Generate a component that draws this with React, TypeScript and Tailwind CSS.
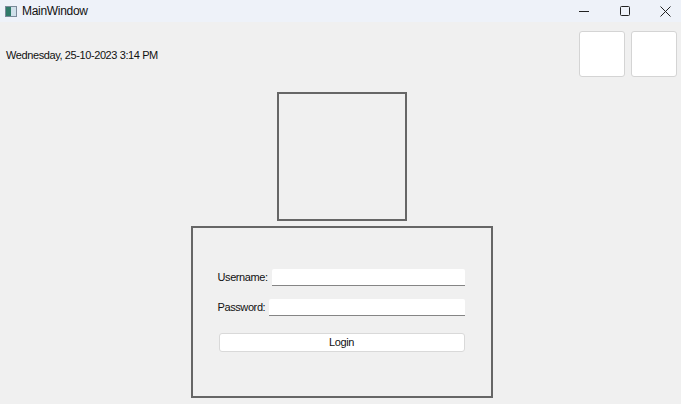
export default function App() {
  return (
    <div className="w-[681px] h-[404px] bg-[#f0f0f0] flex flex-col overflow-hidden text-[11px] tracking-[-0.4px] text-[#111]" style={{ fontFamily: '"Liberation Sans", Arial, sans-serif' }}>
      <div className="h-[22px] bg-[#eef2f9] flex items-center shrink-0">
        <svg width="12" height="11" viewBox="0 0 12 11" className="ml-[5px] mr-[5px]">
          <rect x="0.5" y="0.5" width="11" height="10" fill="#fff" stroke="#7a8a9a" />
          <rect x="1" y="1" width="5" height="9" fill="#2f7a6a" />
          <rect x="6" y="1" width="5" height="9" fill="#cfe0ea" />
        </svg>
        <span className="leading-none text-[12px] tracking-[-0.3px]">MainWindow</span>
        <div className="ml-auto mr-[-5px] flex items-center h-full">
          <div className="w-[41px] h-full flex items-center justify-center">
            <svg width="10" height="10" viewBox="0 0 10 10"><path d="M0 5.5h10" stroke="#222" strokeWidth="1" /></svg>
          </div>
          <div className="w-[41px] h-full flex items-center justify-center">
            <svg width="10" height="10" viewBox="0 0 10 10"><rect x="0.5" y="0.5" width="9" height="9" rx="1" fill="none" stroke="#222" /></svg>
          </div>
          <div className="w-[41px] h-full flex items-center justify-center">
            <svg width="11" height="11" viewBox="0 0 11 11"><path d="M0.5 0.5l10 10M10.5 0.5l-10 10" stroke="#222" strokeWidth="1" /></svg>
          </div>
        </div>
      </div>

      <div className="flex items-center pl-[6px] pr-[4px] pt-[9px] pb-[15px]">
        <span className="mt-[2px]">Wednesday, 25-10-2023 3:14 PM</span>
        <div className="ml-auto flex gap-[6px]">
          <div className="w-[46px] h-[46px] bg-white border border-[#d4d4d4] rounded-[3px]" />
          <div className="w-[46px] h-[46px] bg-white border border-[#d4d4d4] rounded-[3px]" />
        </div>
      </div>

      <div className="flex flex-col items-center pl-[2px]">
        <div className="w-[130px] h-[129px] border-2 border-[#666]" />
        <div className="mt-[5px] w-[302px] h-[172px] border-2 border-[#666] pl-[25px] pr-[26px] pt-[41px]">
          <div className="flex items-center h-[17px]">
            <span className="whitespace-nowrap mr-[4px]">Username:</span>
            <div className="flex-1 h-[17px] bg-white border-b border-[#858585] rounded-t-[2px]" />
          </div>
          <div className="flex items-center h-[17px] mt-[13px]">
            <span className="whitespace-nowrap mr-[4px]">Password:</span>
            <div className="flex-1 h-[17px] bg-white border-b border-[#858585] rounded-t-[2px]" />
          </div>
          <div className="mt-[17px] ml-[1px] h-[19px] bg-white border border-[#d9d9d9] rounded-[3px] flex items-center justify-center">
            Login
          </div>
        </div>
      </div>
    </div>
  );
}
